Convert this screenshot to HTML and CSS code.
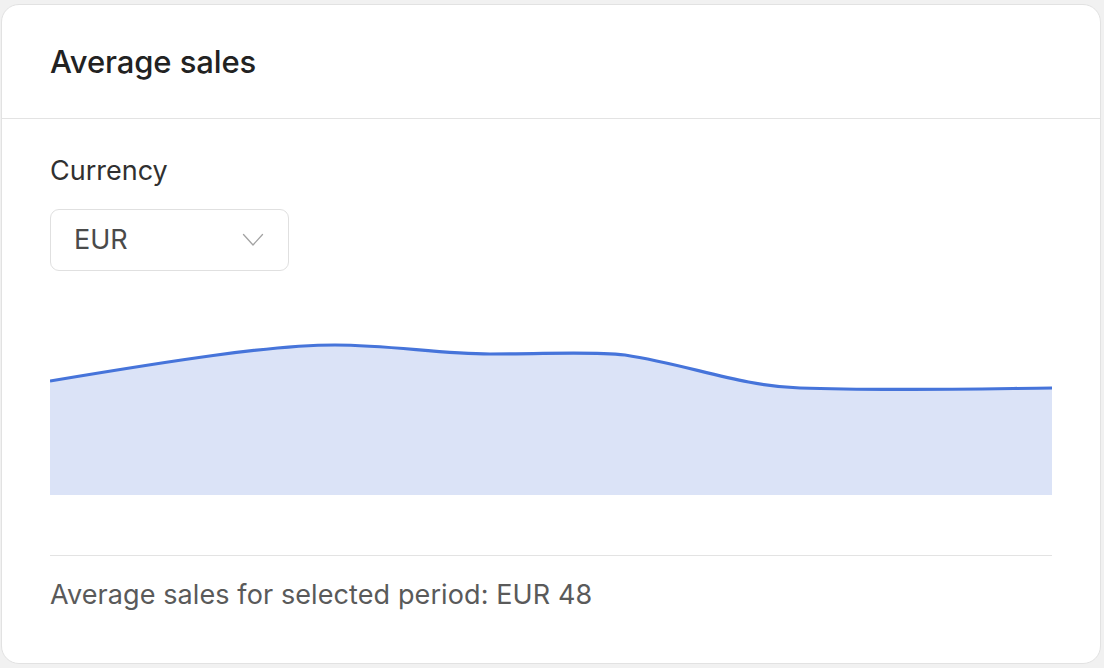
FILE: index.html
```html
<!DOCTYPE html>
<html lang="en">
<head>
<meta charset="utf-8">
<title>Average sales</title>
<link rel="stylesheet" href="styles.css">
</head>
<body>
<section class="card">
  <header class="card-header">
    <h2 class="card-title">Average sales</h2>
  </header>
  <div class="card-body">
    <label class="field-label" for="currency">Currency</label>
    <div class="select" id="currency">
      <span class="select-value">EUR</span>
      <svg class="chevron" width="22" height="14" viewBox="0 0 22 14" aria-hidden="true">
        <path d="M1.5 1.5 L11 12 L20.5 1.5" fill="none" stroke="#a3a3a3" stroke-width="1.3" stroke-linecap="round" stroke-linejoin="round"/>
      </svg>
    </div>
    <svg class="chart" width="1002" height="200" viewBox="0 0 1002 200" preserveAspectRatio="none" aria-hidden="true">
      <path class="chart-area" d="M0,86 C120,66 220,50 285,50 C340,50 390,59 440,59 C500,59 540,56 575,60 C640,70 690,91 750,93 C830,96 920,94 1002,93 L1002,200 L0,200 Z"/>
      <path class="chart-line" d="M0,86 C120,66 220,50 285,50 C340,50 390,59 440,59 C500,59 540,56 575,60 C640,70 690,91 750,93 C830,96 920,94 1002,93"/>
    </svg>
    <div class="card-footer">Average sales for selected period: EUR 48</div>
  </div>
</section>
</body>
</html>
```

FILE: styles.css
```css
html, body {
  margin: 0;
  padding: 0;
}
body {
  background: #f1f1f1;
  font-family: Inter, "Noto Sans", "Liberation Sans", sans-serif;
  color: #303030;
}
.card {
  box-sizing: border-box;
  width: 1100px;
  height: 660px;
  margin: 4px 3px 0 1px;
  background: #ffffff;
  border: 1.5px solid #e2e2e2;
  border-radius: 18px;
  display: flex;
  flex-direction: column;
}
.card-header {
  box-sizing: border-box;
  height: 114px;
  border-bottom: 1.5px solid #e3e3e3;
  padding: 0 48px;
  display: flex;
  align-items: center;
}
.card-title {
  margin: 0;
  font-size: 31px;
  line-height: 40px;
  font-weight: 550;
  color: #222222;
  letter-spacing: -0.1px;
}
.card-body {
  padding: 36px 48px 0 48px;
  display: flex;
  flex-direction: column;
}
.field-label {
  font-size: 27px;
  line-height: 32px;
  color: #303030;
}
.select {
  box-sizing: border-box;
  margin-top: 22px;
  width: 239px;
  height: 62px;
  border: 1.5px solid #e0e0e0;
  border-radius: 9px;
  display: flex;
  align-items: center;
  justify-content: space-between;
  padding: 0 24px 0 23px;
}
.select-value {
  font-size: 27px;
  line-height: 32px;
  color: #4a4a4a;
}
.chevron {
  display: block;
}
.chart {
  display: block;
  margin-top: 24px;
  width: 1002px;
  height: 200px;
}
.chart-area {
  fill: #dbe3f7;
}
.chart-line {
  fill: none;
  stroke: #4674da;
  stroke-width: 3.2;
}
.card-footer {
  margin-top: 60px;
  border-top: 1.5px solid #e3e3e3;
  padding-top: 23px;
  font-size: 27px;
  line-height: 32px;
  letter-spacing: 0.1px;
  color: #5a5a5a;
}
```
